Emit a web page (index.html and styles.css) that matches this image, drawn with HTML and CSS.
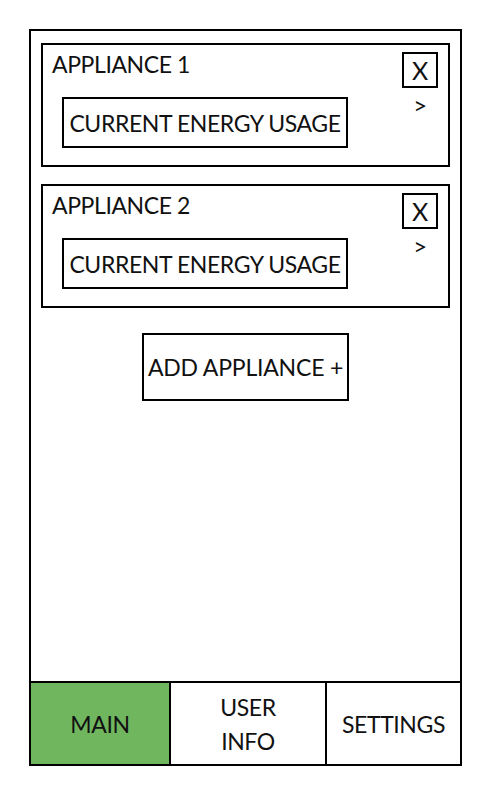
FILE: index.html
```html
<!DOCTYPE html>
<html lang="en">
<head>
    <meta charset="UTF-8">
    <meta name="viewport" content="width=device-width, initial-scale=1.0">
    <title>Energy Monitor</title>
    <link rel="stylesheet" href="styles.css">
</head>
<body>
<div class="phone">
    <div class="content">
        <div class="card">
            <div class="card-main">
                <div class="card-title">APPLIANCE 1</div>
                <div class="usage-box">CURRENT ENERGY USAGE</div>
            </div>
            <div class="card-side">
                <button class="remove-btn">X</button>
                <span class="arrow">&gt;</span>
            </div>
        </div>

        <div class="card">
            <div class="card-main">
                <div class="card-title">APPLIANCE 2</div>
                <div class="usage-box">CURRENT ENERGY USAGE</div>
            </div>
            <div class="card-side">
                <button class="remove-btn">X</button>
                <span class="arrow">&gt;</span>
            </div>
        </div>

        <div class="add-row">
            <button class="add-btn">ADD APPLIANCE +</button>
        </div>
    </div>

    <!-- Bottom navigation -->
    <div class="nav">
        <div class="nav-item active">MAIN</div>
        <div class="nav-item">USER<br>INFO</div>
        <div class="nav-item">SETTINGS</div>
    </div>
</div>
</body>
</html>
```

FILE: styles.css
```css
body {
    font-family: Lato, "Open Sans", Arial, sans-serif;
    font-size: 23px;
    letter-spacing: -0.4px;
    margin: 0;
    padding: 29px 0 0 29px;
    background-color: #fff;
    color: #111;
}

.phone {
    box-sizing: border-box;
    width: 433px;
    height: 737px;
    border: 2px solid #000;
    display: flex;
    flex-direction: column;
}

.content {
    flex: 1;
    padding: 12px 10px 0 10px;
}

.card {
    box-sizing: border-box;
    height: 124px;
    border: 2px solid #000;
    display: flex;
    justify-content: space-between;
    margin-bottom: 17px;
}

.card-main {
    padding: 5px 0 0 9px;
}

.card-title {
    line-height: 28px;
    white-space: nowrap;
}

.usage-box {
    box-sizing: border-box;
    width: 286px;
    height: 51px;
    margin: 19px 0 0 10px;
    border: 2px solid #000;
    display: flex;
    align-items: center;
    justify-content: center;
    white-space: nowrap;
}

.card-side {
    display: flex;
    flex-direction: column;
    align-items: center;
    padding: 7px 10px 0 0;
}

.remove-btn {
    box-sizing: border-box;
    width: 36px;
    height: 36px;
    padding: 0;
    border: 2px solid #000;
    background-color: #fff;
    font-family: inherit;
    font-size: 25px;
    line-height: 1;
    color: #111;
}

.arrow {
    font-size: 24px;
    line-height: 24px;
    margin-top: 5px;
}

.add-row {
    display: flex;
    justify-content: center;
    padding-top: 8px;
}

.add-btn {
    box-sizing: border-box;
    width: 207px;
    height: 68px;
    padding: 0;
    border: 2px solid #000;
    background-color: #fff;
    font-family: inherit;
    font-size: 23px;
    letter-spacing: -0.2px;
    color: #111;
    white-space: nowrap;
}

.nav {
    display: flex;
    height: 81px;
    border-top: 2px solid #000;
}

.nav-item {
    display: flex;
    align-items: center;
    justify-content: center;
    text-align: center;
    line-height: 34px;
    border-left: 2px solid #000;
}

.nav-item:nth-child(1) {
    width: 138px;
    border-left: none;
}

.nav-item:nth-child(2) {
    width: 154px;
}

.nav-item:nth-child(3) {
    flex: 1;
}

.active {
    background-color: #70b65f;
}
```
